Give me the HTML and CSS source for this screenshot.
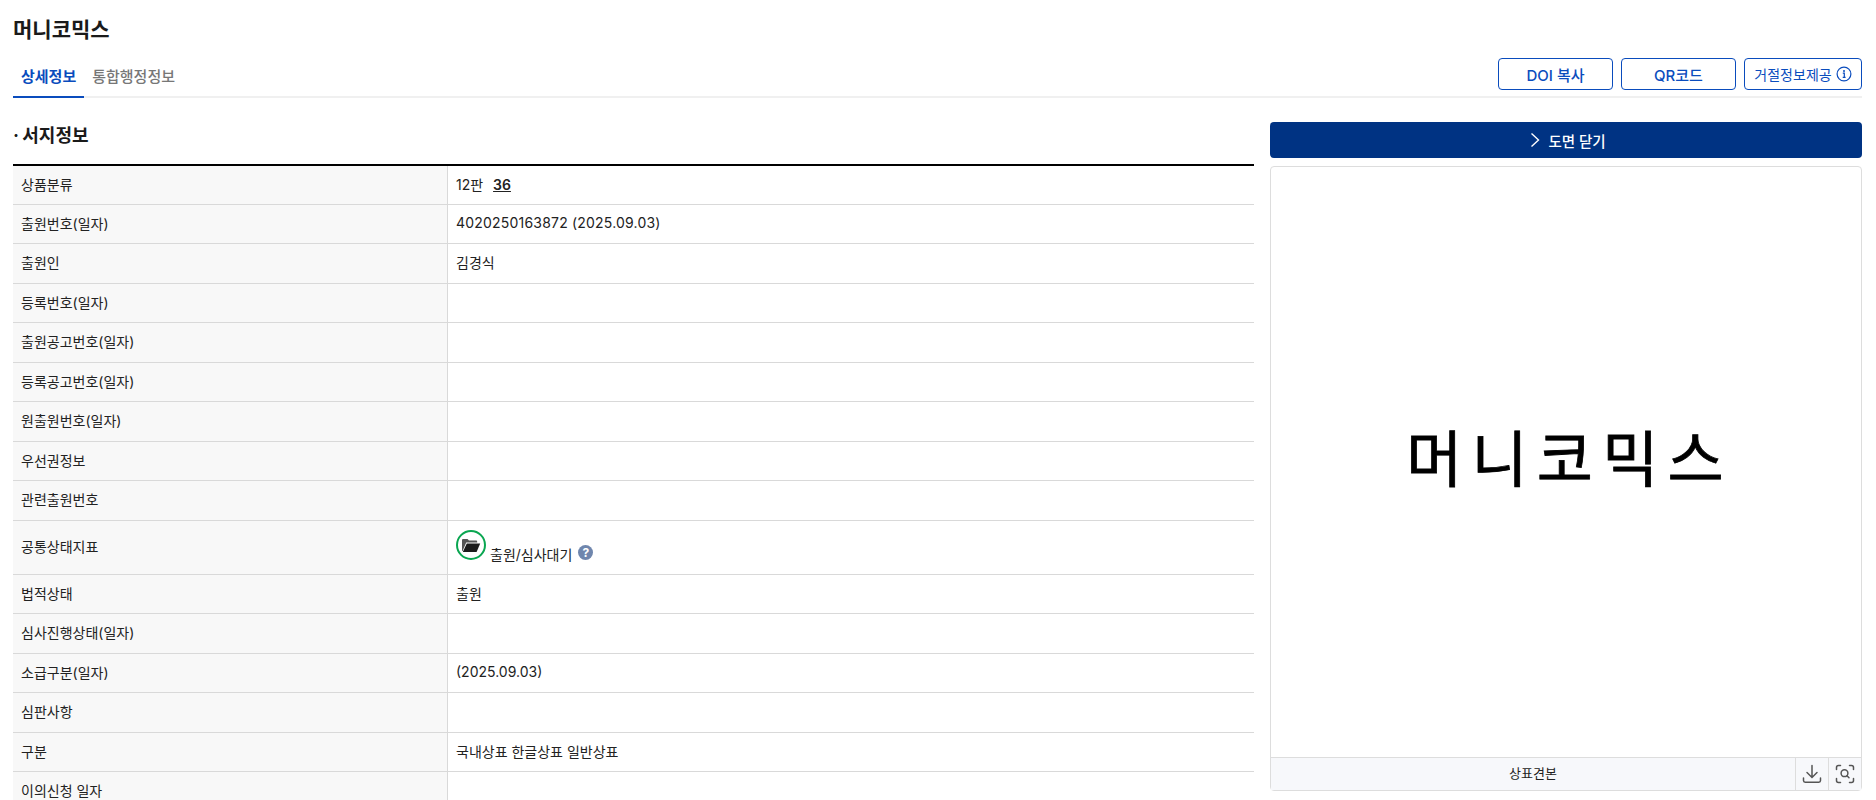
FILE: index.html
```html
<!DOCTYPE html>
<html lang="ko">
<head>
<meta charset="utf-8">
<title>머니코믹스</title>
<link rel="stylesheet" href="styles.css">
</head>
<body>
<div class="page">
  <h1 class="title">머니코믹스</h1>
  <div class="tabbar">
    <nav class="tabs">
      <a class="tab active">상세정보</a>
      <a class="tab">통합행정정보</a>
    </nav>
    <div class="actions">
      <button class="btn">DOI 복사</button>
      <button class="btn">QR코드</button>
      <button class="btn btn-info">거절정보제공
        <svg class="info" viewBox="0 0 16 16" width="16" height="16"><circle cx="8" cy="8" r="6.9" fill="none" stroke="#0a4cbd" stroke-width="1.2"/><circle cx="8" cy="4.9" r="1" fill="#0a4cbd"/><path d="M6.8 7.2H8.3V11.4M6.7 11.4H9.6" fill="none" stroke="#0a4cbd" stroke-width="1.2"/></svg>
      </button>
    </div>
  </div>
  <div class="content">
    <section class="left">
      <h2 class="section-title">· 서지정보</h2>
      <table class="info-table">
        <tbody>
          <tr><th>상품분류</th><td>12판 <b class="cls">36</b></td></tr>
          <tr><th>출원번호(일자)</th><td class="appno">4020250163872 (2025.09.03)</td></tr>
          <tr><th>출원인</th><td>김경식</td></tr>
          <tr><th>등록번호(일자)</th><td></td></tr>
          <tr><th>출원공고번호(일자)</th><td></td></tr>
          <tr><th>등록공고번호(일자)</th><td></td></tr>
          <tr><th>원출원번호(일자)</th><td></td></tr>
          <tr><th>우선권정보</th><td></td></tr>
          <tr><th>관련출원번호</th><td></td></tr>
          <tr class="status-row"><th>공통상태지표</th><td>
            <div class="status">
              <span class="ring"><svg viewBox="0 0 20 16" width="20" height="16"><path d="M1 14V3.2C1 2.5 1.5 2 2.2 2H6.5L8 3.6H15C15.7 3.6 16.2 4.1 16.2 4.8V5.6H5.2L1.6 14Z" fill="#555"/><path d="M5.8 6.4H19.2L15.6 15H1.8Z" fill="#1c1c1c"/></svg></span>
              <span class="status-text">출원/심사대기</span>
              <span class="help">?</span>
            </div>
          </td></tr>
          <tr><th>법적상태</th><td>출원</td></tr>
          <tr><th>심사진행상태(일자)</th><td></td></tr>
          <tr><th>소급구분(일자)</th><td>(2025.09.03)</td></tr>
          <tr><th>심판사항</th><td></td></tr>
          <tr><th>구분</th><td>국내상표 한글상표 일반상표</td></tr>
          <tr><th>이의신청 일자</th><td></td></tr>
        </tbody>
      </table>
    </section>
    <aside class="right">
      <button class="close-btn">
        <svg viewBox="0 0 10 16" width="10" height="16"><path d="M1.5 1.5L8.5 8L1.5 14.5" fill="none" stroke="#fff" stroke-width="1.4"/></svg>
        도면 닫기
      </button>
      <div class="viewer">
        <div class="mark"><span class="mark-text">머니코믹스</span></div>
        <div class="viewer-foot">
          <span class="foot-label">상표견본</span>
          <span class="foot-icon">
            <svg viewBox="0 0 20 20" width="20" height="20"><path d="M10 1.5V13M5 8.5L10 13.5L15 8.5M1.5 14V16.5C1.5 17.6 2.2 18.2 3.2 18.2H16.8C17.8 18.2 18.5 17.6 18.5 16.5V14" fill="none" stroke="#555" stroke-width="1.5" stroke-linecap="round"/></svg>
          </span>
          <span class="foot-icon">
            <svg viewBox="0 0 20 20" width="20" height="20"><path d="M1.5 5.5V3.5C1.5 2.4 2.4 1.5 3.5 1.5H5.5M14.5 1.5H16.5C17.6 1.5 18.5 2.4 18.5 3.5V5.5M18.5 14.5V16.5C18.5 17.6 17.6 18.5 16.5 18.5H14.5M5.5 18.5H3.5C2.4 18.5 1.5 17.6 1.5 16.5V14.5" fill="none" stroke="#555" stroke-width="1.5" stroke-linecap="round"/><circle cx="9.5" cy="9.2" r="3.4" fill="none" stroke="#555" stroke-width="1.5"/><path d="M12 11.8L14 13.8" stroke="#555" stroke-width="1.5" stroke-linecap="round"/></svg>
          </span>
        </div>
      </div>
    </aside>
  </div>
</div>
</body>
</html>
```
FILE: styles.css
```css
* { box-sizing: border-box; }
html, body { margin: 0; padding: 0; background: #fff; }
body {
  font-family: Inter, "Noto Sans CJK KR", sans-serif;
  color: #222;
  font-size: 14px;
}
.page {
  height: 800px;
  overflow: hidden;
  padding: 0 14px 0 13px;
}
.title {
  margin: 0;
  padding-top: 15px;
  height: 56px;
  font-size: 21px;
  line-height: 30px;
  font-weight: 700;
  color: #1a1a1a;
}
.tabbar {
  display: flex;
  justify-content: space-between;
  height: 42px;
  border-bottom: 2px solid #f0f0f0;
}
.tabs { display: flex; }
.tab {
  height: 42px;
  padding: 11px 8px 0;
  font-size: 15px;
  line-height: 20px;
  font-weight: 500;
  color: #777;
  border-bottom: 2px solid transparent;
}
.tab.active { color: #0a4cbd; font-weight: 700; border-bottom-color: #0a4cbd; }
.actions { display: flex; gap: 8px; padding-top: 2px; }
.btn {
  width: 115px;
  height: 32px;
  border: 1px solid #0a4cbd;
  border-radius: 4px;
  background: #fff;
  color: #0a4cbd;
  font: 500 15px Inter, "Noto Sans CJK KR", sans-serif;
  padding: 0;
}
.btn-info {
  width: 118px;
  display: flex;
  align-items: center;
  justify-content: center;
  gap: 4px;
  font-size: 14px;
  font-weight: 400;
  white-space: nowrap;
}
.content {
  display: flex;
  justify-content: space-between;
  padding-top: 24px;
}
.left { width: 1241px; }
.section-title {
  margin: 0;
  height: 42px;
  font-size: 18px;
  line-height: 28px;
  font-weight: 700;
  word-spacing: -1px;
  color: #1a1a1a;
}
.info-table {
  width: 100%;
  border-collapse: separate;
  border-spacing: 0;
  border-top: 2px solid #000;
  table-layout: fixed;
}
.info-table th, .info-table td {
  height: 39.5px;
  padding: 0 8px 2px;
  border-bottom: 1px solid #d9d9d9;
  font-size: 14px;
  font-weight: 400;
  text-align: left;
  color: #222;
}
.info-table tr:first-child th, .info-table tr:first-child td { height: 38.5px; }
.info-table th {
  width: 435px;
  background: #f8f8f8;
  border-right: 1px solid #d9d9d9;
}
.info-table .appno { letter-spacing: 0.2px; }
.status-row th, .status-row td { height: 54px; }
.cls { font-weight: 600; text-decoration: underline; margin-left: 6px; }
.status { display: flex; align-items: flex-end; height: 30px; margin-top: -3px; }
.ring {
  width: 30px;
  height: 30px;
  border: 2px solid #0aa651;
  border-radius: 50%;
  display: flex;
  align-items: center;
  justify-content: center;
  margin-right: 4px;
}
.status-text { line-height: 20px; margin-bottom: -5px; }
.help {
  width: 15px;
  height: 15px;
  margin: 0 0 0 6px;
  border-radius: 50%;
  background: #6f86ad;
  color: #fff;
  font-size: 12px;
  font-weight: 700;
  line-height: 15px;
  text-align: center;
}
.right {
  width: 592px;
  display: flex;
  flex-direction: column;
  gap: 8px;
}
.close-btn {
  height: 36px;
  border: 0;
  border-radius: 4px;
  padding: 0 0 0 4px;
  background: #003383;
  color: #fff;
  font: 500 14.5px Inter, "Noto Sans CJK KR", sans-serif;
  display: flex;
  align-items: center;
  justify-content: center;
  gap: 8px;
}
.viewer {
  height: 625px;
  border: 1px solid #ddd;
  border-radius: 4px;
  display: flex;
  flex-direction: column;
}
.mark {
  flex: 1;
  display: flex;
  align-items: center;
  justify-content: center;
  padding: 0 0 4px 7px;
}
.mark-text {
  font-size: 61px;
  line-height: 1;
  font-weight: 400;
  -webkit-text-stroke: 0.8px #000;
  letter-spacing: 9.2px;
  color: #000;
}
.viewer-foot {
  height: 33px;
  display: flex;
  align-items: stretch;
  border-top: 1px solid #ddd;
  background: #f7f8fb;
}
.foot-label {
  flex: 1;
  text-align: center;
  font-size: 13px;
  line-height: 31px;
}
.foot-icon {
  width: 33px;
  display: flex;
  align-items: center;
  justify-content: center;
  border-left: 1px solid #ddd;
}
```
